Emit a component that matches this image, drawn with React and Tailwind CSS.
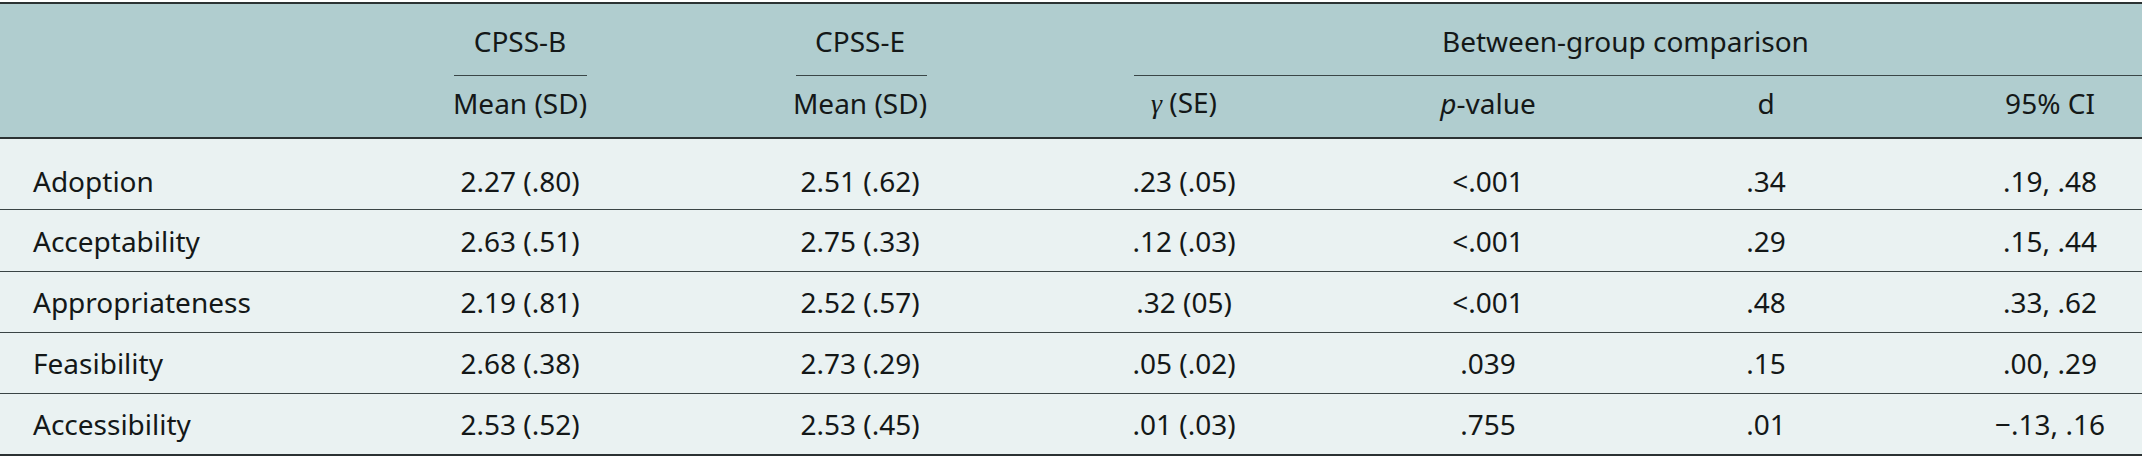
import React from 'react';

const cols = 'grid grid-cols-[286px_468px_212px_436px_172px_384px_184px]';

const rows = [
  ['Adoption', '2.27 (.80)', '2.51 (.62)', '.23 (.05)', '<.001', '.34', '.19, .48'],
  ['Acceptability', '2.63 (.51)', '2.75 (.33)', '.12 (.03)', '<.001', '.29', '.15, .44'],
  ['Appropriateness', '2.19 (.81)', '2.52 (.57)', '.32 (05)', '<.001', '.48', '.33, .62'],
  ['Feasibility', '2.68 (.38)', '2.73 (.29)', '.05 (.02)', '.039', '.15', '.00, .29'],
  ['Accessibility', '2.53 (.52)', '2.53 (.45)', '.01 (.03)', '.755', '.01', '\u2212.13, .16'],
];

// row heights, borders included
const rowStyles = [
  'h-[71px] pt-[14px] border-b border-[#3a4445]',
  'h-[62px] border-b border-[#3a4445]',
  'h-[61px] border-b border-[#3a4445]',
  'h-[61px] border-b border-[#3a4445]',
  'h-[60px]',
];

export default function App() {
  return (
    <div className="w-[2142px] h-[459px] bg-white pt-[2px] text-[28px] text-[#141818] font-['Noto_Sans',sans-serif]">
      <div className="border-t-2 border-b-2 border-[#2b3233]">
        <div className="bg-[#b0cdcf] border-b-2 border-[#2b3233]">
          <div className={`${cols} h-[72px]`}>
            <div />
            <div className="flex flex-col items-center justify-end">
              <span className="leading-[38px]">CPSS-B</span>
              <div className="w-[133px] h-[1px] bg-[#3a4647] mt-[15px]" />
            </div>
            <div className="flex flex-col items-start justify-end">
              <span className="leading-[38px] pl-[61px]">CPSS-E</span>
              <div className="w-[131px] h-[1px] bg-[#3a4647] mt-[15px] ml-[42px]" />
            </div>
            <div className="col-span-4 flex flex-col justify-end pl-[168px]">
              <span className="leading-[38px] pl-[308px]">Between-group comparison</span>
              <div className="w-full h-[1px] bg-[#3a4647] mt-[15px]" />
            </div>
          </div>
          <div className={`${cols} h-[61px] items-center pb-[7px]`}>
            <div />
            <div className="text-center">Mean (SD)</div>
            <div className="text-center">Mean (SD)</div>
            <div className="text-center">
              <span className="font-['Liberation_Serif',serif] italic">γ</span> (SE)
            </div>
            <div className="text-center">
              <span className="italic">p</span>-value
            </div>
            <div className="text-center">d</div>
            <div className="text-center">95% CI</div>
          </div>
        </div>
        <div className="bg-[#eaf2f2]">
          {rows.map((r, i) => (
            <div key={r[0]} className={`${cols} items-center ${rowStyles[i]}`}>
              <div className="pl-[33px]">{r[0]}</div>
              {r.slice(1).map((v, j) => (
                <div key={j} className="text-center">{v}</div>
              ))}
            </div>
          ))}
        </div>
      </div>
    </div>
  );
}
